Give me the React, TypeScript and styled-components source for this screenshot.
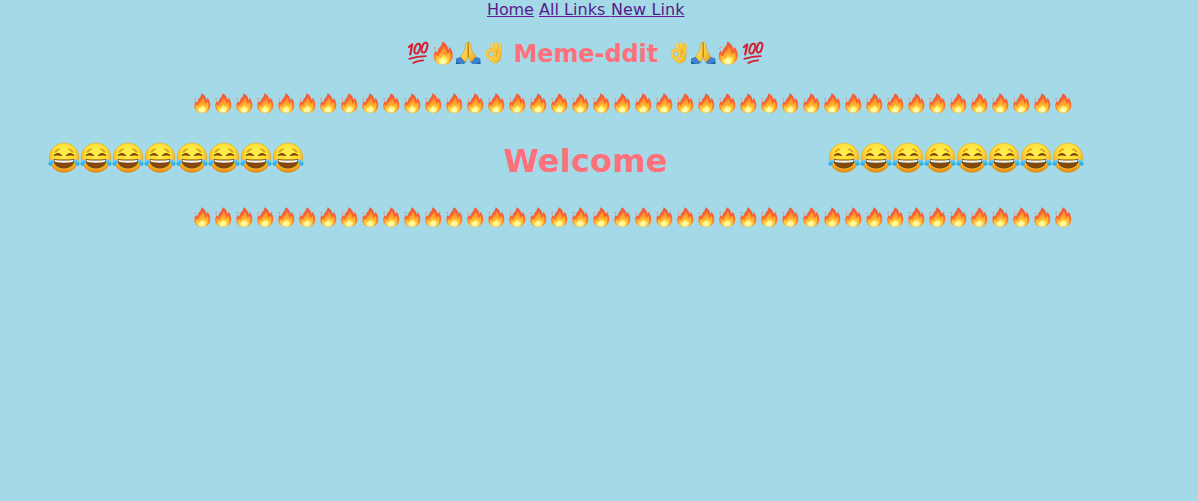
import React from "react";
import styled, { createGlobalStyle } from "styled-components";

const Global = createGlobalStyle`
  body { margin: 0; background: #a4d9e7; font-family: Verdana, "DejaVu Sans", sans-serif; }
`;
const Page = styled.main`
  width: 1198px;
  height: 501px;
  overflow: hidden;
  background: #a4d9e7;
`;
const Nav = styled.nav`
  height: 38px;
  padding-left: 487px;
  display: flex;
  align-items: flex-start;
  font-size: 16px;
  line-height: 19px;
  white-space: pre;
`;
const NavLink = styled.a<{ $width: number; $gap?: number; $spacing: number }>`
  width: ${(p) => p.$width}px;
  margin-right: ${(p) => p.$gap ?? 0}px;
  letter-spacing: ${(p) => p.$spacing}px;
  color: #551a8b;
  text-decoration: underline;
  text-decoration-color: #6a1b9a;
  text-decoration-thickness: 1px;
  text-underline-offset: 1px;
`;
const Brand = styled.header`
  height: 30px;
  padding-left: 406px;
  display: flex;
  align-items: center;
`;
const BrandName = styled.h2`
  margin: 0;
  width: 160px;
  padding: 1px 0 0 7.5px;
  box-sizing: border-box;
  color: #ff707a;
  font-size: 24px;
  line-height: 30px;
  letter-spacing: -0.1px;
  white-space: nowrap;
`;
const FireRow = styled.div<{ $top: number }>`
  display: flex;
  height: 22px;
  margin-top: ${(p) => p.$top}px;
  padding-left: 191.5px;
`;
const Banner = styled.section`
  display: flex;
  align-items: center;
  height: 40px;
  margin-top: 24px;
  padding-left: 48px;
`;
const Faces = styled.div`
  display: flex;
  width: 256px;
`;
const Welcome = styled.h1`
  width: 524px;
  margin: 0;
  padding: 5px 0 0 199.5px;
  box-sizing: border-box;
  color: #ff707a;
  font-size: 32px;
  line-height: 40px;
  letter-spacing: 0.2px;
  white-space: nowrap;
`;
const Emoji = styled.svg<{ $w: number; $h: number }>`
  display: block;
  flex: none;
  width: ${(p) => p.$w}px;
  height: ${(p) => p.$h}px;
  overflow: visible;
`;
const Definitions = styled.svg`
  position: absolute;
  width: 0;
  height: 0;
`;

const Artwork = () => (
  <Definitions aria-hidden="true">
    <defs>
      <linearGradient id="flameOuter" x1="0" y1="0" x2="0" y2="1">
        <stop offset="0" stopColor="#ee5a3a" />
        <stop offset=".5" stopColor="#fa6433" />
        <stop offset=".8" stopColor="#ff8a2c" />
        <stop offset="1" stopColor="#ffb840" />
      </linearGradient>
      <linearGradient id="flameInner" x1="0" y1="0" x2="0" y2="1">
        <stop offset="0" stopColor="#ff7e2c" />
        <stop offset=".4" stopColor="#ffa42a" />
        <stop offset="1" stopColor="#ffdf48" />
      </linearGradient>
      <radialGradient id="flameCore" cx=".5" cy=".75" r=".6">
        <stop offset="0" stopColor="#fffde0" />
        <stop offset=".5" stopColor="#fff57c" />
        <stop offset="1" stopColor="#ffd835" stopOpacity=".4" />
      </radialGradient>
      <radialGradient id="face" cx=".5" cy=".3" r=".68">
        <stop offset="0" stopColor="#fff04f" />
        <stop offset=".5" stopColor="#ffdc34" />
        <stop offset=".8" stopColor="#f8b526" />
        <stop offset="1" stopColor="#e28a18" />
      </radialGradient>
      <linearGradient id="skin" x1="0" y1="0" x2="1" y2="1">
        <stop offset="0" stopColor="#ffe065" />
        <stop offset=".6" stopColor="#fcc93a" />
        <stop offset="1" stopColor="#e59c1c" />
      </linearGradient>
      <linearGradient id="tear" x1="0" y1="0" x2="0" y2="1">
        <stop offset="0" stopColor="#8adfff" />
        <stop offset=".5" stopColor="#38c0fa" />
        <stop offset="1" stopColor="#18a2e8" />
      </linearGradient>
      <symbol id="fire" viewBox="0 0 21 22">
        <path d="M9.2 1.2C12.2 2.2 14.3 5 14.5 8.3C15.2 7.6 15.6 6.6 15.5 5.6C17.4 8 18.6 11 18.3 14C17.9 18.4 14.8 20.9 10.4 20.9C5.7 20.9 2.6 18.2 2.3 14.2C2.2 12 2.9 10.2 3.8 8.8C4.1 9.8 4.6 10.3 5.4 10.6C5.4 8.6 6.4 7.2 7.6 5.8C8.8 4.4 9.6 3 9.2 1.2Z" fill="url(#flameOuter)" />
        <path d="M2.5 8C2.2 6.6 3 5.8 4.3 5.8C4.1 6.6 3.5 7.5 2.5 8Z" fill="#f58068" />
        <path d="M10.4 5C13 7.6 12.8 9.8 13.6 11.8C14.8 11.3 15.4 10.3 15.7 9.3C17.4 14 16.2 20.2 10.4 20.3C5.2 20.4 3.4 17.5 3.7 12.4C4.5 13.4 5.4 13.9 6.6 13.5C6.2 10.4 10.7 9 10.4 5Z" fill="url(#flameInner)" />
        <path d="M10 11.2C10.9 13.4 12.3 14.6 14.3 14C15 18 13.6 20.5 10.3 20.5C7 20.5 5.2 18.8 5.7 15.4C6.6 16 7.4 16.2 8.1 15.5C9.1 14.5 9.8 13.2 10 11.2Z" fill="url(#flameCore)" />
      </symbol>
      <symbol id="joy" viewBox="0 0 32 32">
        <circle cx="16" cy="15.8" r="14.8" fill="url(#face)" stroke="#dd9020" strokeWidth=".4" />
        <path d="M7.6 9.7Q8.9 7.8 11.2 7.2M20.8 7.2Q23.1 7.8 24.4 9.7" fill="none" stroke="#b67a1c" strokeWidth="1.1" strokeLinecap="round" />
        <path d="M6 13.4Q10 9.5 13.9 13.6Q10 12.3 6 13.4ZM18.1 13.6Q22 9.5 26 13.4Q22 12.3 18.1 13.6Z" fill="#70400c" stroke="#70400c" strokeWidth=".8" strokeLinejoin="round" />
        <path d="M5.2 17Q16 18.2 26.8 17C26.6 23.2 22.2 26.4 16 26.4S5.4 23.2 5.2 17Z" fill="#80490e" />
        <path d="M6.4 17.9Q16 18.9 25.6 17.9Q25.6 19.4 24.5 20Q16 21.6 7.5 20Q6.4 19.4 6.4 17.9Z" fill="#f7f8f5" />
        <path d="M6 16.9C3 17.3.8 19 .4 21.2C.2 23.3 2 24.2 3.5 23.2C5.3 22 6 19.6 6 16.9ZM26 16.9C29 17.3 31.2 19 31.6 21.2C31.8 23.3 30 24.2 28.5 23.2C26.7 22 26 19.6 26 16.9Z" fill="url(#tear)" />
      </symbol>
      <symbol id="hundred" viewBox="0 0 25 26">
        <g fill="none" stroke="#d51f32" strokeLinecap="round" strokeLinejoin="round">
          <path d="M2.9 7L6.2 4.4L4.2 14.5" strokeWidth="2.2" />
          <ellipse cx="11.3" cy="8.6" rx="2.5" ry="5.1" transform="rotate(18 11.3 8.6)" strokeWidth="2" />
          <ellipse cx="18.5" cy="7.6" rx="2.5" ry="5.1" transform="rotate(18 18.5 7.6)" strokeWidth="2" />
          <path d="M3.2 18.8Q11 16.3 19.7 16.1M7.3 22.8Q12 20.6 17.1 20.4" strokeWidth="1.9" />
        </g>
      </symbol>
      <symbol id="pray" viewBox="0 0 25 26">
        <path d="M0 18.6L4.8 16.8L10.4 21.8L8 23.9H0ZM24.4 18.6L19.6 16.8L14 21.8L16.4 23.9H24.4Z" fill="#3d82cb" />
        <path d="M0 21.5L5 23.9H0ZM24.4 21.5L19.4 23.9H24.4Z" fill="#2561aa" />
        <path d="M12.1 2.4C10.9 1.9 10 2.6 9.8 3.9L8.7 10.2L4.6 16.8L8.8 21.8Q12.1 19.7 12.1 16.5ZM12.3 2.4C13.5 1.9 14.4 2.6 14.6 3.9L15.7 10.2L19.8 16.8L15.6 21.8Q12.3 19.7 12.3 16.5Z" fill="url(#skin)" stroke="#bf811c" strokeWidth=".4" />
        <path d="M12.2 2.7V17" fill="none" stroke="#a76f15" strokeWidth=".8" />
      </symbol>
      <symbol id="okay" viewBox="0 0 25 26">
        <g stroke="#dca030" strokeWidth=".4" strokeLinejoin="round">
          <path d="M16.7 10.5L17.7 4.7C18.1 2.8 20.5 3.1 20.4 5L20.1 14.2C20.1 19.5 17.8 23.4 13.7 23.2L12 14.5Z" fill="url(#skin)" />
          <path d="M13.5 11L13.8 3.2C14 1.7 16.6 1.8 16.8 3.4L17.3 12.5L14.5 16Z" fill="url(#skin)" />
          <path d="M13 12L9.4 5.4C8.5 3.5 10.7 2.3 12.1 4.2L16.2 11L15.2 17.5Z" fill="url(#skin)" />
        </g>
        <path d="M13.7 13.2C12.3 10.2 9.4 9.2 7.3 10.8C5.2 12.7 6.4 16.2 8.3 18.1C9.8 19.9 11.3 21.7 14 21.7" fill="none" stroke="#e2a22c" strokeWidth="2.9" strokeLinecap="round" />
        <path d="M13.7 13.2C12.3 10.2 9.4 9.2 7.3 10.8C5.2 12.7 6.4 16.2 8.3 18.1C9.8 19.9 11.3 21.7 14 21.7M8 17.6C10 18.8 12.2 17.6 13.7 14.2" fill="none" stroke="#fccd41" strokeWidth="2.3" strokeLinecap="round" />
        <ellipse cx="10.2" cy="14" rx="2.1" ry="2.7" transform="rotate(-35 10.2 14)" fill="#a4d9e7" stroke="#d99a28" strokeWidth=".3" />
      </symbol>
    </defs>
  </Definitions>
);

const Icon = ({ name, w = 25, h = 26 }: { name: string; w?: number; h?: number }) => (
  <Emoji $w={w} $h={h}><use href={`#${name}`} width={w} height={h} /></Emoji>
);
const Flames = ({ top }: { top: number }) => (
  <FireRow $top={top}>
    {Array.from({ length: 42 }, (_, i) => <Icon key={i} name="fire" w={21} h={22} />)}
  </FireRow>
);
const Laughs = () => (
  <Faces>{Array.from({ length: 8 }, (_, i) => <Icon key={i} name="joy" w={32} h={32} />)}</Faces>
);

export default function App() {
  return (
    <>
      <Global />
      <Artwork />
      <Page>
        <Nav>
          <NavLink href="#home" $width={47} $gap={5} $spacing={-0.1}>Home</NavLink>
          <NavLink href="#links" $width={72} $spacing={0.05}>All Links </NavLink>
          <NavLink href="#new" $width={74} $spacing={0.1}>New Link</NavLink>
        </Nav>
        <Brand>
          <Icon name="hundred" /><Icon name="fire" /><Icon name="pray" /><Icon name="okay" />
          <BrandName>Meme-ddit</BrandName>
          <Icon name="okay" /><Icon name="pray" /><Icon name="fire" /><Icon name="hundred" />
        </Brand>
        <Flames top={24} />
        <Banner><Laughs /><Welcome>Welcome</Welcome><Laughs /></Banner>
        <Flames top={28} />
      </Page>
    </>
  );
}
